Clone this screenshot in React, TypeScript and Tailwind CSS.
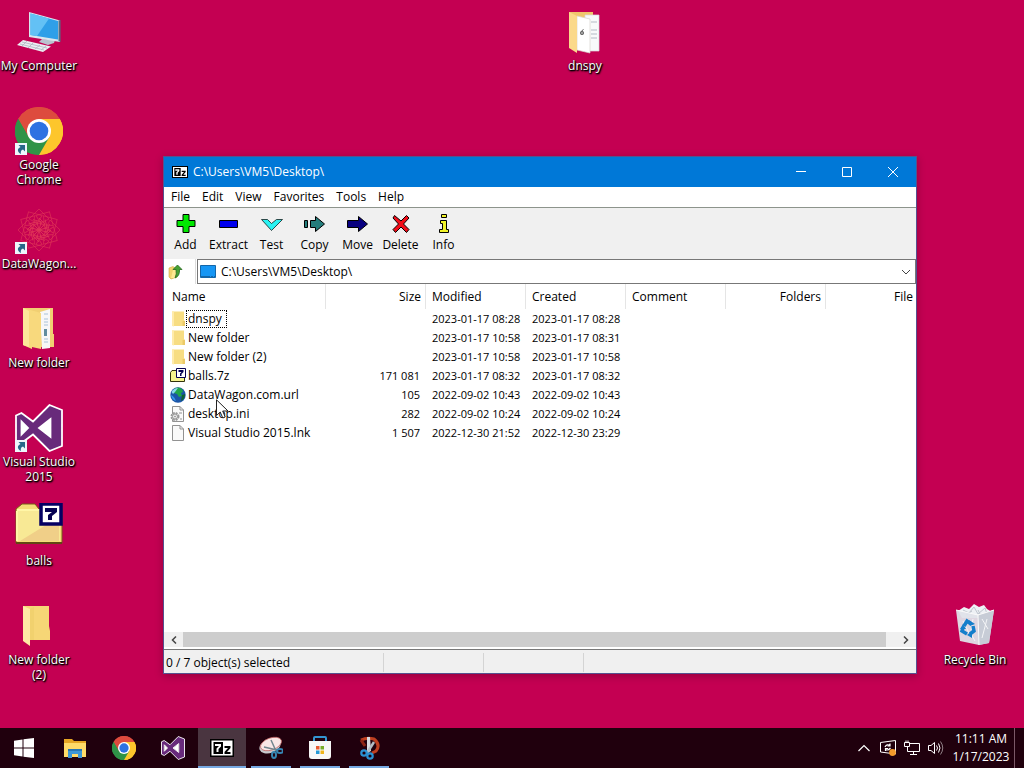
import React from 'react';

interface IconProps {
  className?: string;
}

interface FileRow {
  name: string;
  size?: string;
  modified: string;
  created: string;
  Icon: React.FC<IconProps>;
  focused?: boolean;
}

const ChromeIcon: React.FC<IconProps> = ({ className }) => (
  <svg viewBox="0 0 48 48" className={className} aria-hidden="true">
    <path d="M24 24 L3.2 12 A24 24 0 0 1 44.8 12 Z" fill="#dd4b3e" />
    <path d="M24 24 L44.8 12 A24 24 0 0 1 24 48 Z" fill="#fdc62c" />
    <path d="M24 24 L24 48 A24 24 0 0 1 3.2 12 Z" fill="#2f9347" />
    <path d="M24 12 H44.8 A24 24 0 0 1 24 48 L34.4 30 Z" fill="#fdc62c" />
    <path d="M13.6 30 L3.2 12 A24 24 0 0 1 44.8 12 H24 Z" fill="#dd4b3e" />
    <path d="M34.4 30 L24 48 A24 24 0 0 1 3.2 12 L13.6 30 Z" fill="#2f9347" />
    <circle cx="24" cy="24" r="12" fill="#fff" />
    <circle cx="24" cy="24" r="9.3" fill="#2d72e2" />
  </svg>
);

const VisualStudioIcon: React.FC<IconProps> = ({ className }) => (
  <svg viewBox="0 0 48 48" className={className} aria-hidden="true">
    <path
      d="M34.5 1 L47 6 V42 L34.5 47 L18 30.5 L6.5 39 L1 36.5 V11.5 L6.5 9 L18 17.5 Z M35.5 15 L24 24 L35.5 33 Z M6.5 17.5 V30.5 L13 24 Z"
      fill="#682a7b"
      fillRule="evenodd"
      stroke="#fff"
      strokeWidth="1.8"
    />
    <path d="M35 15.5 L24.5 24 L35 32.5 Z M7 18 V30 L13 24 Z" fill="#fff" />
  </svg>
);

const ComputerIcon: React.FC<IconProps> = ({ className }) => (
  <svg viewBox="0 0 48 48" className={className} aria-hidden="true">
    <path d="M27 31 L40 32 L39 35 L33 37 L24 34 Z" fill="#b9c3cf" />
    <path d="M14 4 L45 12.500 V34 L14 29 Z" fill="#dbe6ee" />
    <path d="M15.500 5.500 L43 13 V31.500 L15.500 27 Z" fill="#2f9fe8" />
    <path d="M15.500 5.500 L34 10.500 L22 28 L15.500 27 Z" fill="#63c1f5" />
    <path d="M43.500 12.500 L45.500 12 V34 L43.500 33 Z" fill="#526c84" />
    <path d="M8 32 L36 38.500 L28 44 L2 37 Z" fill="#eceff3" />
    <path d="M7 34 L32 40 M5 36 L29 42 M12 33 L7 38 M18 35 L13 40 M25 37 L20 41 M31 38 L26 42" stroke="#aeb6c2" strokeWidth=".8" />
  </svg>
);

const DataWagonIcon: React.FC<IconProps> = ({ className }) => (
  <svg viewBox="0 0 48 48" className={className} aria-hidden="true" fill="none" stroke="#df3557" strokeWidth=".9">
    {[0, 30, 60, 90, 120, 150, 180, 210, 240, 270, 300, 330].map((angle) => (
      <g key={angle} transform={`rotate(${angle} 24 24)`}>
        <path d="M24 3 L34 13 L24 18 L14 13 Z" opacity=".7" />
        <path d="M24 12 L30 18 L24 24" />
      </g>
    ))}
    <circle cx="24" cy="24" r="7" opacity=".7" />
  </svg>
);

const OpenFolderIcon: React.FC<IconProps> = ({ className }) => (
  <svg viewBox="0 0 48 48" className={className} aria-hidden="true">
    <path d="M8 3 H38 V29 H39 V42 H25 L8 40 Z" fill="#f1cf72" />
    <path d="M25 7 L35 4 V43 L27 44 Z" fill="#f7f7f7" />
    <path d="M29 9 H33 M29 14 H33 M29 17 H33 M29 20 H33 M29 34 H33 M29 37 H33" stroke="#a9c2d8" />
    <path d="M29 24 H32 V31 H29 Z" fill="#618c9e" />
    <path d="M8 3 L26 8 V44 L17 42 V44 L8 40 Z" fill="#f8d97d" />
    <path d="M8 3 L14 6 V42 L8 40 Z" fill="#fde69a" />
  </svg>
);

const ClosedFolderIcon: React.FC<IconProps> = ({ className }) => (
  <svg viewBox="0 0 48 48" className={className} aria-hidden="true">
    <path d="M8 4 H34 V24 L35 29 V38 H8 Z" fill="#f6d676" />
    <path d="M8 4 L15 7 V44 L8 39 Z" fill="#ffe9a5" />
    <path d="M15 7 L19 5 V38 H15 Z" fill="#eccb66" opacity=".5" />
  </svg>
);

const DnspyFolderIcon: React.FC<IconProps> = ({ className }) => (
  <svg viewBox="0 0 48 48" className={className} aria-hidden="true">
    <path d="M8 4 H32 V40 H12 Z" fill="#efc66c" />
    <path d="M24 7 H38 V43 H24 Z" fill="#f8f9fb" stroke="#dad7dd" strokeWidth=".7" />
    <path d="M30 14 H36 M30 22 H36 M30 26 H36 M30 30 H36" stroke="#b3b9c5" />
    <path d="M16 8 L29 11 V45 L16 42 Z" fill="#fff" stroke="#d9d4cf" strokeWidth=".7" />
    <circle cx="21" cy="25" r="1.400" fill="none" stroke="#555" strokeWidth="1.200" />
    <path d="M20.500 23 L22.500 21.500" stroke="#555" />
    <path d="M8 4 L16 8 V45 L8 40 Z" fill="#fbd98a" />
  </svg>
);

const ArchiveIcon: React.FC<IconProps> = ({ className }) => (
  <svg viewBox="0 0 48 48" className={className} aria-hidden="true">
    <path d="M1 6 L7 1 H20 L24 6 H47 V40 H1 Z" fill="#f4dc76" stroke="#765c17" />
    <path d="M2 7 H45 V38 H2 Z" fill="#f8e995" />
    <path d="M5 38 L44 14 V38 Z" fill="#f0cf88" />
    <path d="M2 7 H25 M2 8 V38" stroke="#fff6a7" strokeWidth="2" />
    <path d="M1 40 H47" stroke="#634514" strokeWidth="2" />
    <path d="M26 1 H46 V21 H26 Z" fill="#fff" stroke="#050063" strokeWidth="3.500" />
    <path d="M30 5 H42 V9 L37 13 V17 H33 V12 L37 9 H30 Z" fill="#050052" />
  </svg>
);

const RecycleBinIcon: React.FC<IconProps> = ({ className }) => (
  <svg viewBox="0 0 48 48" className={className} aria-hidden="true">
    <path d="M7 9 L13 5 L18 7 L23 2 L28 5 L33 3 L36 7 L41 10 L35 16 H11 Z" fill="#eef1f5" />
    <path d="M12 8 L18 11 L23 5 L27 12 L34 6 L36 12 M15 13 L21 9 M27 8 L30 14" stroke="#bfc5ce" fill="none" />
    <path d="M5 8 L27 13 L43 8 L38 41 L28 43 L9 39 Z" fill="#dfe2e9" fillOpacity=".95" />
    <path d="M27 13 L43 8 L38 41 L28 43 Z" fill="#c7ccd6" />
    <path d="M5 8 L27 13 L43 8 M27 13 L28 43" stroke="#fafafa" fill="none" />
    <path d="M12 19 L18 31 M22 17 L20 28 M31 17 L37 27 M36 17 L31 36 M24 39 L20 32" stroke="#f4f5f7" />
    <g fill="none" stroke="#147ecb" strokeWidth="3.500">
      <path d="M13 24 L16 19 L20 22" />
      <path d="M22 24 L23 29 L19 32" />
      <path d="M16 32 L11 29 L12 26" />
    </g>
    <path d="M18 18 L24 22 L19 24 Z M21 29 L16 33 L21 36 Z M9 27 L12 22 L15 27 Z" fill="#147ecb" />
  </svg>
);

const ShortcutBadge: React.FC = () => (
  <svg viewBox="0 0 12 12" className="absolute bottom-0 left-0 size-3" aria-hidden="true">
    <path d="M0 0 H12 V12 H0 Z" fill="#edf6fb" />
    <path d="M3.500 2 H10 V8.500 L8 6.500 C5.500 7.500 5.500 9 6 11 C2 9 2 5.500 5.500 4 Z" fill="#276789" />
  </svg>
);

const SevenZipIcon: React.FC<IconProps> = ({ className }) => (
  <svg viewBox="0 0 24 18" className={className} aria-hidden="true">
    <path d="M0 0 H24 V18 H0 Z" fill="#000" />
    <path d="M1.500 1.500 H22.500 V16.500 H1.500 Z" fill="#fff" />
    <path d="M3.500 3 H13 V15 H3.500 Z" fill="#000" />
    <path d="M5 5 H11 V7.500 L8.500 10 V13 H6.500 V9.500 L9 7 H5 Z" fill="#fff" />
    <path d="M14.500 7 H20.500 V9 L17 13 H20.500 V15 H14.500 V13 L18 9 H14.500 Z" fill="#000" />
  </svg>
);

const SmallFolderIcon: React.FC<IconProps> = ({ className }) => (
  <svg viewBox="0 0 16 16" className={className} aria-hidden="true">
    <path d="M2 .5 H14 V9 L15 10 V15 H2 Z" fill="#f7dd83" />
    <path d="M2 .5 H4 V15.500 L2 15 Z" fill="#ffebab" />
    <path d="M12.500 10 H15 V15 H12.500 Z" fill="#ecca68" />
  </svg>
);

const SmallArchiveIcon: React.FC<IconProps> = ({ className }) => (
  <svg viewBox="0 0 16 16" className={className} aria-hidden="true">
    <path d="M.5 4.500 L2 2.500 H7 V4 H14.500 V13.500 H.5 Z" fill="#f5f38e" stroke="#33330d" />
    <path d="M6.500 .5 H15.500 V9.500 H6.500 Z" fill="#fff" stroke="#050052" />
    <path d="M8.500 2 H13.500 V4 L11.500 6 V8 H10 V5.500 L11.500 4 H8.500 Z" fill="#050052" />
  </svg>
);

const GlobeIcon: React.FC<IconProps> = ({ className }) => (
  <svg viewBox="0 0 16 16" className={className} aria-hidden="true">
    <circle cx="8" cy="8" r="7.700" fill="#1b56a8" />
    <path d="M4 2 Q8 -1 12 2 L13 5 L11 6 L12 9 L9 10 L7 7 L4 6 Z" fill="#20a54a" />
    <path d="M1.500 5 Q4 1 8 1 L5 5 L3 7 Z" fill="#8bdcea" />
    <path d="M1 8 Q4 9 6 14 Q2 13 1 8 Z" fill="#3598ed" />
    <path d="M12 8 L15 7 Q15 12 11 14 Z" fill="#126432" />
  </svg>
);

const PageIcon: React.FC<IconProps> = ({ className }) => (
  <svg viewBox="0 0 16 16" className={className} aria-hidden="true">
    <path d="M2.500 .5 H10 L13.500 4 V15.500 H2.500 Z" fill="#fafafa" stroke="#929292" />
    <path d="M10 .5 V4 H13.500" fill="none" stroke="#929292" />
  </svg>
);

const SettingsPageIcon: React.FC<IconProps> = ({ className }) => (
  <svg viewBox="0 0 16 16" className={className} aria-hidden="true">
    <path d="M2.500 .5 H10 L13.500 4 V15.500 H2.500 Z" fill="#fafafa" stroke="#929292" />
    <path d="M10 .5 V4 H13.500 M9 7 H12 M10 13 H12" fill="none" stroke="#929292" />
    <circle cx="5" cy="10.500" r="3.500" fill="#ddd" stroke="#999" strokeWidth="2" strokeDasharray="1.800 1" />
    <circle cx="5" cy="10.500" r="2.500" fill="#e9e9e9" stroke="#999" />
    <circle cx="5" cy="10.500" r=".8" fill="#888" />
  </svg>
);

const FolderUpIcon: React.FC<IconProps> = ({ className }) => (
  <svg viewBox="0 0 16 16" className={className} aria-hidden="true">
    <path d="M1 4 L5 2.500 L7 4 H9 V13 L3 15 L1 13 Z" fill="#f1d36d" stroke="#d0a943" strokeWidth=".6" />
    <path d="M3 14 L5 6 H11 L9 14 Z" fill="#ffe891" />
    <path d="M5 5.500 L9.500 1 L14 5.500 H11.500 Q12 12 7 14 Q9 10 8 5.500 Z" fill="#46a132" stroke="#24671d" strokeWidth=".8" />
  </svg>
);

const desktopIcons = [
  { label: 'My Computer', Icon: ComputerIcon },
  { label: 'Google Chrome', Icon: ChromeIcon, shortcut: true },
  { label: 'DataWagon...', Icon: DataWagonIcon, shortcut: true },
  { label: 'New folder', Icon: OpenFolderIcon },
  { label: 'Visual Studio 2015', Icon: VisualStudioIcon, shortcut: true },
  { label: 'balls', Icon: ArchiveIcon },
  { label: 'New folder (2)', Icon: ClosedFolderIcon },
];

const files: FileRow[] = [
  { name: 'dnspy', modified: '2023-01-17 08:28', created: '2023-01-17 08:28', Icon: SmallFolderIcon, focused: true },
  { name: 'New folder', modified: '2023-01-17 10:58', created: '2023-01-17 08:31', Icon: SmallFolderIcon },
  { name: 'New folder (2)', modified: '2023-01-17 10:58', created: '2023-01-17 10:58', Icon: SmallFolderIcon },
  { name: 'balls.7z', size: '171 081', modified: '2023-01-17 08:32', created: '2023-01-17 08:32', Icon: SmallArchiveIcon },
  { name: 'DataWagon.com.url', size: '105', modified: '2022-09-02 10:43', created: '2022-09-02 10:43', Icon: GlobeIcon },
  { name: 'desktop.ini', size: '282', modified: '2022-09-02 10:24', created: '2022-09-02 10:24', Icon: SettingsPageIcon },
  { name: 'Visual Studio 2015.lnk', size: '1 507', modified: '2022-12-30 21:52', created: '2022-12-30 23:29', Icon: PageIcon },
];

const menus = ['File', 'Edit', 'View', 'Favorites', 'Tools', 'Help'];

const tools = [
  { label: 'Add', shape: <path d="M9 2.500 H15 V8.500 H21 V14.500 H15 V20.500 H9 V14.500 H3 V8.500 H9 Z" fill="#00e800" /> },
  { label: 'Extract', shape: <path d="M2.500 8.500 H20.500 V15.500 H2.500 Z" fill="#0000ee" /> },
  { label: 'Test', shape: <path d="M1.500 7.500 H7.500 L11.500 11.500 L16.500 7.500 H22.500 L11.500 18.500 Z" fill="#29f3f3" strokeWidth=".7" /> },
  { label: 'Copy', shape: <path d="M1.500 8.500 H4.500 V15.500 H1.500 Z M7.500 8.500 H12.500 V4.500 L21.500 12 L12.500 19.500 V15.500 H7.500 Z" fill="#247d7c" /> },
  { label: 'Move', shape: <path d="M1.500 8.500 H12.500 V4.500 L21.500 12 L12.500 19.500 V15.500 H1.500 Z" fill="#080080" /> },
  { label: 'Delete', shape: <path d="M5.500 3.500 L12 9 L17.500 3.500 L20 6 L14.500 12 L20 17.500 L17.500 20.500 L12 15 L6.500 20.500 L4 17.500 L9.500 12 L4 6 Z" fill="#f10c18" /> },
  { label: 'Info', shape: <path d="M9.500 2.500 H14.500 V5.500 H9.500 Z M8.500 8.500 H14.500 V17.500 H16.500 V20.500 H7.500 V17.500 H10.500 V11.500 H8.500 Z" fill="#f1f329" /> },
];

const WindowsIcon: React.FC<IconProps> = ({ className }) => (
  <svg viewBox="0 0 20 20" className={className} aria-hidden="true">
    <path d="M0 2.800 L8.500 1.500 V9.500 H0 Z M9.500 1.300 L20 0 V9.500 H9.500 Z M0 10.500 H8.500 V18.500 L0 17.300 Z M9.500 10.500 H20 V20 L9.500 18.700 Z" fill="#fff" />
  </svg>
);

const ExplorerIcon: React.FC<IconProps> = ({ className }) => (
  <svg viewBox="0 0 24 24" className={className} aria-hidden="true">
    <path d="M1 3 H9 L11 5 H23 V21 H1 Z" fill="#e6a624" />
    <path d="M1 7 H23 V21 H1 Z" fill="#ffdb69" />
    <path d="M5 22 V13 H19 V22 H15 V18 H9 V22 Z" fill="#3d97d5" />
    <path d="M5 13 H19 V15 H5 Z" fill="#2676b4" />
  </svg>
);

const SnippingIcon: React.FC<IconProps> = ({ className }) => (
  <svg viewBox="0 0 24 24" className={className} aria-hidden="true">
    <ellipse cx="11" cy="10" rx="11" ry="7" transform="rotate(-20 11 10)" fill="#c8c9ce" />
    <ellipse cx="12" cy="8" rx="11" ry="6" transform="rotate(-20 12 8)" fill="#f8e6e6" stroke="#bd5c5d" strokeWidth=".7" />
    <path d="M12 4 L17 15 M5 11 L18 14" stroke="#70858e" strokeWidth="1.500" />
    <g fill="none" stroke="#3685b3" strokeWidth="2">
      <ellipse cx="15" cy="19" rx="2" ry="3" />
      <ellipse cx="21" cy="15" rx="3" ry="2" />
    </g>
  </svg>
);

const StoreIcon: React.FC<IconProps> = ({ className }) => (
  <svg viewBox="0 0 24 24" className={className} aria-hidden="true">
    <path d="M6 6 V2 Q6 1 7 1 H17 Q18 1 18 2 V6" fill="none" stroke="#3394d0" strokeWidth="2" />
    <path d="M1 5 H23 V20 Q23 23 20 23 H4 Q1 23 1 20 Z" fill="#f7f7f7" />
    <path d="M8 10 H11.500 V13.500 H8 Z" fill="#e75a32" />
    <path d="M12.500 10 H16 V13.500 H12.500 Z" fill="#77ad28" />
    <path d="M8 14.500 H11.500 V18 H8 Z" fill="#2599d6" />
    <path d="M12.500 14.500 H16 V18 H12.500 Z" fill="#efb51d" />
  </svg>
);

const SketchIcon: React.FC<IconProps> = ({ className }) => (
  <svg viewBox="0 0 24 24" className={className} aria-hidden="true">
    <path d="M4 4 Q10 1 17 3 Q24 9 19 15 L15 17" fill="none" stroke="#bf3f20" strokeWidth="3" />
    <path d="M4 4 L8 10" stroke="#8c2415" strokeWidth="3" />
    <path d="M10 1 H13 L14 15 L10 17 Z" fill="#d9dce0" />
    <path d="M17 6 L10 17" stroke="#b4bdc4" strokeWidth="2.500" />
    <g fill="none" stroke="#2a91d2" strokeWidth="2.200">
      <circle cx="7" cy="17" r="2.700" />
      <circle cx="13" cy="20" r="2.700" />
    </g>
  </svg>
);

const taskbarApps = [
  { label: 'File Explorer', Icon: ExplorerIcon, size: 'size-6', state: '' },
  { label: 'Google Chrome', Icon: ChromeIcon, size: 'size-6', state: '' },
  { label: 'Visual Studio', Icon: VisualStudioIcon, size: 'size-6', state: '' },
  { label: '7-Zip', Icon: SevenZipIcon, size: 'h-[18px] w-6', state: 'active' },
  { label: 'Snipping Tool', Icon: SnippingIcon, size: 'size-6', state: 'running' },
  { label: 'Microsoft Store', Icon: StoreIcon, size: 'size-6', state: 'running' },
  { label: 'Snip & Sketch', Icon: SketchIcon, size: 'size-6', state: 'running' },
];

interface DesktopItemProps {
  label: string;
  Icon: React.FC<IconProps>;
  shortcut?: boolean;
}

const DesktopItem: React.FC<DesktopItemProps> = ({ label, Icon, shortcut }) => (
  <button className="flex h-[99px] w-[78px] shrink-0 flex-col items-center gap-0.5 pt-2 text-white">
    <span className="relative size-12">
      <Icon className="size-12" />
      {shortcut && <ShortcutBadge />}
    </span>
    <span className="max-w-full leading-[15px] [text-shadow:1px_1px_2px_#000,1px_1px_1px_#000,0_1px_2px_#000]">{label}</span>
  </button>
);

const FileTable: React.FC = () => (
  <table className="w-[760px] table-fixed border-separate border-spacing-0 text-left whitespace-nowrap">
    <colgroup>
      <col className="w-40" />
      <col span={6} className="w-[100px]" />
    </colgroup>
    <thead>
      <tr className="h-[25px] [&>th]:border-r [&>th]:border-[#e5e5e5] [&>th]:py-0 [&>th]:pr-1 [&>th]:pl-1.5 [&>th]:font-normal">
        <th>Name</th>
        <th className="text-right">Size</th>
        <th>Modified</th>
        <th>Created</th>
        <th>Comment</th>
        <th className="text-right">Folders</th>
        <th><span className="block pr-2 text-right">File</span></th>
      </tr>
    </thead>
    <tbody>
      {files.map(({ name, size, modified, created, Icon, focused }) => (
        <tr key={name} className="h-[19px] [&>td]:p-0">
          <td>
            <span className="flex h-[19px] items-center pl-1">
              <Icon className="size-4 shrink-0" />
              <span className={focused ? 'border border-dotted border-black pr-1 pl-px' : 'pl-0.5'}>{name}</span>
            </span>
          </td>
          <td><span className="block pr-1.5 text-right text-[11px]">{size}</span></td>
          <td><span className="block pl-1.5 text-[11px]">{modified}</span></td>
          <td><span className="block pl-1.5 text-[11px]">{created}</span></td>
          <td />
          <td />
          <td />
        </tr>
      ))}
    </tbody>
  </table>
);

const FileManager: React.FC = () => (
  <section className="absolute top-[156px] right-[107px] bottom-[54px] left-[163px] flex flex-col border border-[#55528f] bg-white shadow-[0_2px_8px_rgba(0,0,0,0.25)]">
    <header className="flex h-[30px] shrink-0 items-center bg-[#0078d7] pl-2 text-white">
      <SevenZipIcon className="mr-[5px] h-3 w-4" />
      <h1 className="flex-1">C:\Users\VM5\Desktop\</h1>
      <button aria-label="Minimize" className="flex h-full w-[46px] items-center justify-center">
        <svg viewBox="0 0 10 10" className="size-2.5"><path d="M0 4.500 H10" stroke="#fff" /></svg>
      </button>
      <button aria-label="Maximize" className="flex h-full w-[46px] items-center justify-center">
        <svg viewBox="0 0 10 10" className="size-2.5"><path d="M.5 .5 H9.500 V9.500 H.5 Z" fill="none" stroke="#fff" /></svg>
      </button>
      <button aria-label="Close" className="flex h-full w-[46px] items-center justify-center">
        <svg viewBox="0 0 10 10" className="size-2.5"><path d="M0 0 L10 10 M10 0 L0 10" stroke="#fff" /></svg>
      </button>
    </header>

    <nav className="flex h-[21px] shrink-0 items-center border-b border-[#8d948c] pl-px">
      {menus.map((menu) => (
        <button key={menu} className="px-1.5">{menu}</button>
      ))}
    </nav>

    <div className="flex h-[51px] shrink-0 bg-[#f0f0f0]">
      {tools.map(({ label, shape }) => (
        <button key={label} className="flex w-[43px] flex-col items-center gap-px pt-1">
          <svg viewBox="0 0 24 24" className="size-6" stroke="#000" aria-hidden="true">{shape}</svg>
          <span className="leading-4">{label}</span>
        </button>
      ))}
    </div>

    <div className="flex h-[25px] shrink-0">
      <button aria-label="Up one level" className="flex w-8 items-center border-r border-[#ddd] pl-1">
        <FolderUpIcon className="size-4" />
      </button>
      <div className="ml-px flex flex-1 items-center border border-[#777] pl-0.5">
        <svg viewBox="0 0 16 14" className="mr-[5px] h-3.5 w-4" aria-hidden="true">
          <path d="M.5 .5 H15.500 V12.500 H.5 Z" fill="#1696f4" stroke="#1466a8" />
          <path d="M1 11.500 H15" stroke="#1466a8" strokeDasharray="9 1 2 1" />
        </svg>
        <input aria-label="Address" defaultValue="C:\Users\VM5\Desktop\" className="min-w-0 flex-1 outline-none" />
        <button aria-label="Show locations" className="px-1">
          <svg viewBox="0 0 10 6" className="h-1.5 w-2.5"><path d="M1 1 L5 5 L9 1" fill="none" stroke="#444" /></svg>
        </button>
      </div>
    </div>

    <div className="flex min-h-0 flex-1 flex-col border-b border-[#777] pb-0.5">
      <div className="min-h-0 flex-1 overflow-hidden pl-0.5">
        <FileTable />
      </div>
      <div className="flex h-[15px] shrink-0 items-center bg-[#f0f0f0] pl-px">
        <button aria-label="Scroll left" className="flex w-[18px] justify-center">
          <svg viewBox="0 0 6 8" className="h-2 w-1.5"><path d="M5 .5 L1.500 4 L5 7.500" fill="none" stroke="#444" strokeWidth="1.500" /></svg>
        </button>
        <div className="mr-2.5 h-full flex-1 bg-[#cdcdcd]" />
        <button aria-label="Scroll right" className="flex w-5 justify-center">
          <svg viewBox="0 0 6 8" className="h-2 w-1.5"><path d="M1 .5 L4.500 4 L1 7.500" fill="none" stroke="#444" strokeWidth="1.500" /></svg>
        </button>
      </div>
    </div>

    <footer className="flex h-[23px] shrink-0 items-stretch bg-[#f0f0f0] pt-[3px] pb-px">
      <span className="flex w-[220px] items-center border-r border-[#d4d4d4] pl-0.5">0 / 7 object(s) selected</span>
      <span className="w-[100px] border-r border-[#d4d4d4]" />
      <span className="w-[100px] border-r border-[#d4d4d4]" />
    </footer>
  </section>
);

const Taskbar: React.FC = () => (
  <footer className="flex h-10 shrink-0 items-center bg-[#20000d] text-white">
    <button aria-label="Start" className="mr-[3px] flex h-full w-12 items-center justify-center">
      <WindowsIcon className="size-5" />
    </button>
    <div className="flex h-full gap-px">
      {taskbarApps.map(({ label, Icon, size, state }) => (
        <button
          key={label}
          aria-label={label}
          className={`relative flex h-full w-12 items-center justify-center ${state === 'active' ? 'bg-[#4a3540]' : ''}`}
        >
          <Icon className={size} />
          {state === 'active' && <span className="absolute inset-x-0 bottom-0 h-0.5 bg-[#76a9e2]" />}
          {state === 'running' && <span className="absolute inset-x-1 bottom-0 h-0.5 bg-[#76a9e2]" />}
        </button>
      ))}
    </div>
    <div className="ml-auto flex h-full items-center">
      <button aria-label="Show hidden icons" className="flex w-6 justify-center">
        <svg viewBox="0 0 12 8" className="h-2 w-3"><path d="M.5 7 L6 1.500 L11.500 7" fill="none" stroke="#fff" strokeWidth="1.200" /></svg>
      </button>
      <button aria-label="Updates" className="flex w-6 justify-center">
        <svg viewBox="0 0 16 16" className="size-4" fill="none" stroke="#fff">
          <path d="M.5 2.500 L15.500 .5 V14 L.5 12 Z" />
          <path d="M5 7 Q7 3.500 10 5.500 M10 3.500 V6 H7.500 M10.500 8 Q8 11 5.500 9.500 M5.500 11 V8.500 H8" strokeWidth="1.200" />
          <circle cx="12.500" cy="12.500" r="3.400" fill="#f39a2b" stroke="none" />
        </svg>
      </button>
      <button aria-label="Network" className="flex w-6 justify-center">
        <svg viewBox="0 0 16 16" className="size-4" fill="none" stroke="#fff">
          <path d="M5.500 3.500 H15.500 V11.500 H3.500 V7 M9.500 11.500 V14 M6 14.500 H13 M.5 2.500 H5.500 V6.500 H.5 Z M2 2 V.5 M4 2 V.5" />
        </svg>
      </button>
      <button aria-label="Volume" className="flex w-6 justify-center">
        <svg viewBox="0 0 16 16" className="size-4" fill="none" stroke="#fff">
          <path d="M.5 5.500 H3 L6.500 2.500 V13.500 L3 10.500 H.5 Z M8.500 5.500 Q10.500 8 8.500 10.500 M10.500 3.500 Q13.500 8 10.500 12.500" />
          <path d="M12.500 1.500 Q17 8 12.500 14.500" opacity=".5" />
        </svg>
      </button>
      <button className="flex h-full w-[66px] flex-col items-center justify-center leading-[18px]">
        <span>11:11 AM</span>
        <span>1/17/2023</span>
      </button>
      <button aria-label="Show desktop" className="h-full w-2.5 border-l border-[#7b5967]" />
    </div>
  </footer>
);

const App: React.FC = () => (
  <div className="flex h-screen flex-col overflow-hidden bg-[#c40052] font-['Open_Sans','Noto_Sans',sans-serif] text-[12px] leading-4 text-black">
    <main className="relative min-h-0 flex-1">
      <div className="flex flex-col">
        {desktopIcons.map((item) => (
          <DesktopItem key={item.label} {...item} />
        ))}
      </div>
      <div className="absolute top-0 left-[546px]">
        <DesktopItem label="dnspy" Icon={DnspyFolderIcon} />
      </div>
      <div className="absolute right-[10px] bottom-[35px]">
        <DesktopItem label="Recycle Bin" Icon={RecycleBinIcon} />
      </div>
      <FileManager />
      <svg viewBox="0 0 13 20" className="pointer-events-none absolute top-[399px] left-[216px] h-5 w-[13px]" aria-hidden="true">
        <path d="M.5 .8 V16.500 L4.200 13 L6.800 19 L9.200 18 L6.700 12 H12 Z" fill="#fff" stroke="#222" />
      </svg>
    </main>
    <Taskbar />
  </div>
);

export default App;
